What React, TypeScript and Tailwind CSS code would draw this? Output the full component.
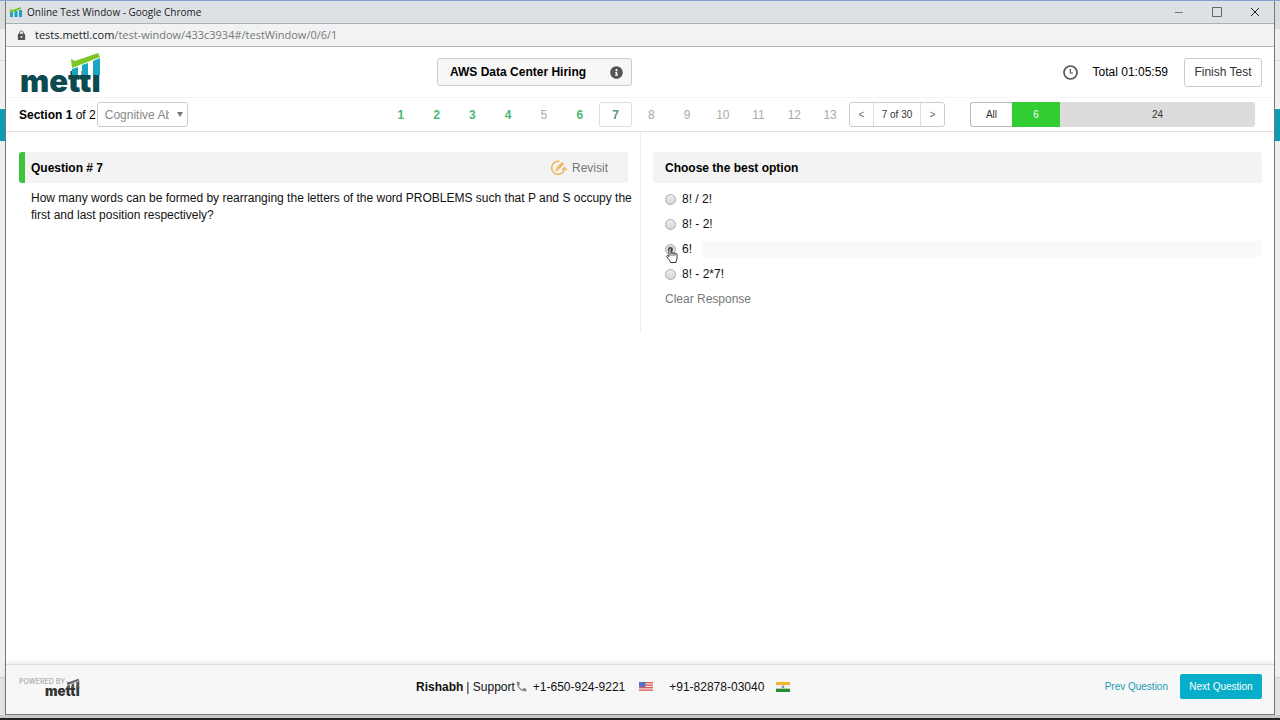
import React from 'react';
import clsx from 'clsx';
import { MdLock, MdPhone } from 'react-icons/md';
import { FaInfoCircle } from 'react-icons/fa';

const options = ['8! / 2!', '8! - 2!', '6!', '8! - 2*7!'];
const answered = [1, 2, 3, 4, 6];
const current = 7;
const pages = Array.from({ length: 13 }, (_, i) => i + 1);

interface LogoProps {
  className?: string;
  text: string;
  bars: string;
  tick: string;
}

const Logo: React.FC<LogoProps> = ({ className, text, bars, tick }) => (
  <svg viewBox="0 0 84 42" className={clsx('overflow-visible', className)} role="img" aria-label="mettl">
    <text x="0" y="41" fill={text} fontSize="31" fontWeight="900" fontFamily="Inter, sans-serif">mettl</text>
    <g fill={bars}>
      <path d="M52 18l6-2v8h-6z" />
      <path d="M62 14l6-2v12h-6z" />
      <path d="M73 10l7-3v17h-7z" />
    </g>
    <path d="M51 8l4 2 23-8 2 4-28 11z" fill={tick} />
  </svg>
);

const Favicon = () => (
  <svg viewBox="0 0 12 10" className="h-[10px] w-3">
    <path d="M0 5h3v5H0zM4.500 4h3v6h-3zM9 3h3v7H9z" fill="#1fa3bd" />
    <path d="M0 2l2 1 9-3v2L0 6z" fill="#79c32b" />
  </svg>
);

const ClockIcon = () => (
  <svg viewBox="0 0 15 15" className="size-[15px]" fill="none" stroke="#555">
    <circle cx="7.500" cy="7.500" r="6.500" strokeWidth="1.700" />
    <path d="M7.300 4v4H10" strokeWidth="1.200" />
  </svg>
);

const RevisitIcon = () => (
  <svg viewBox="0 0 18 16" className="h-4 w-[18px]" fill="none" stroke="#f2b25c">
    <path d="M9.500 1.500A6.500 6.500 0 1 0 14.500 9" strokeWidth="1.500" />
    <path d="M12 10l2.500-2.500L17 10" strokeWidth="1.300" />
    <path d="M7.500 8.800L13 3" strokeWidth="2.800" />
    <path d="M5.500 11l.8-2.800 2 2z" fill="#f2b25c" strokeWidth="0.300" />
  </svg>
);

const UsFlag = () => (
  <svg viewBox="0 0 13 9" className="h-[9px] w-[14px]" preserveAspectRatio="none">
    <path d="M0 0h13v9H0z" fill="#f3dcdc" />
    <path d="M0 .7h13M0 3.200h13M0 5.700h13M0 8.200h13" stroke="#df5a5a" strokeWidth="1.200" />
    <path d="M0 0h6v5H0z" fill="#5873c0" />
  </svg>
);

const IndiaFlag = () => (
  <svg viewBox="0 0 13 9" className="h-[10px] w-[14px]" preserveAspectRatio="none">
    <path d="M0 0h13v3H0z" fill="#f2b52e" />
    <path d="M0 3h13v3H0z" fill="#f4f4f0" />
    <path d="M0 6h13v3H0z" fill="#2f8a2f" />
    <circle cx="6.500" cy="4.500" r="1.300" fill="#7d93b8" />
  </svg>
);

const HandCursor = () => (
  <svg viewBox="0 0 12 16" className="pointer-events-none absolute left-px top-[6px] z-10 h-4 w-3">
    <path
      d="M3 9.500V2a1 1 0 0 1 2 0v4.500a1 1 0 0 1 2 .2 1 1 0 0 1 2 .4 1 1 0 0 1 2 .6V11c0 1.500-.8 2.300-1 4.500H4.500C4.300 13.500 2 11.800.8 9.800c-.5-1 .5-1.600 1.200-1z"
      fill="#fff"
      stroke="#222"
      strokeWidth="0.900"
      strokeLinejoin="round"
    />
    <path d="M5 6.500V9M7 6.800V9M9 7.200V9" stroke="#222" strokeWidth="0.700" />
  </svg>
);

// Slice of the page that shows behind the popup window
const Backdrop: React.FC<{ className: string }> = ({ className }) => (
  <div className={clsx('flex flex-col bg-[#eeeff0]', className)} aria-hidden="true">
    <div className="h-7 bg-[#d9dbdd]" />
    <div className="h-8 border-b border-[#d5d5d5]" />
    <div className="h-12" />
    <div className="h-8 bg-[#0a9db4]" />
    <div className="flex-1" />
    <div className="h-[38px] border-t border-[#d0d0d0] bg-[#e2e2e2]" />
  </div>
);

const TitleBar = () => (
  <div className="flex h-[23px] items-center border-b border-[#a9afb5] bg-[#dde1e6] pl-1">
    <Favicon />
    <span className="ml-[5px] flex-1 font-['Open_Sans',sans-serif] text-[10px] text-[#222]">Online Test Window - Google Chrome</span>
    <div className="flex gap-7 pr-[14px] text-[#333]">
      <button aria-label="Minimize">
        <svg viewBox="0 0 10 10" className="size-[10px]" stroke="#777"><path d="M1 5.500h8" /></svg>
      </button>
      <button aria-label="Maximize">
        <svg viewBox="0 0 10 10" className="size-[10px]" fill="none" stroke="#666"><path d="M.5 .5h9v9h-9z" /></svg>
      </button>
      <button aria-label="Close">
        <svg viewBox="0 0 10 10" className="size-[10px]" stroke="#222"><path d="M1 1l8 8M9 1L1 9" /></svg>
      </button>
    </div>
  </div>
);

const AddressBar = () => (
  <div className="flex h-[23px] items-center border-b border-[#b4b8bb] bg-[#f0f2f3] pl-[10px]">
    <MdLock className="size-[11px] text-[#555]" />
    <span className="ml-2 font-['Open_Sans',sans-serif] text-[11px] text-[#777]">
      <span className="text-[#222]">tests.mettl.com</span>/test-window/433c3934#/testWindow/0/6/1
    </span>
  </div>
);

const Header = () => (
  <header className="flex h-[51px] items-center border-b border-[#f6f6f6] pr-3">
    <div className="w-[34%] pl-[14px]">
      <Logo className="h-[42px] w-[84px]" text="#0d4a50" bars="#1ba5c4" tick="#7cc522" />
    </div>
    <div className="ml-1 flex h-7 w-[195px] items-center justify-between rounded-[3px] border border-[#ccc] bg-[#f7f7f7] pl-3 pr-2">
      <h1 className="whitespace-nowrap text-[12px] font-bold">AWS Data Center Hiring</h1>
      <button aria-label="Test information"><FaInfoCircle className="size-[13px] text-[#555]" /></button>
    </div>
    <div className="ml-auto flex items-center">
      <ClockIcon />
      <span className="ml-[15px] text-[12px]">Total 01:05:59</span>
      <button className="ml-4 h-[29px] w-[78px] rounded-[3px] border border-[#ccc] text-[12px] text-[#333]">Finish Test</button>
    </div>
  </header>
);

const SectionNav = () => (
  <nav className="flex h-[34px] items-center border-b border-[#e2e2e2] pl-[13px] pr-[19px] text-[12px]">
    <label htmlFor="section"><b>Section 1</b> of 2</label>
    <div className="relative ml-px">
      <select
        id="section"
        className="h-[25px] w-[91px] appearance-none overflow-hidden text-clip rounded-[3px] border border-[#ccc] bg-white pl-[7px] pr-[18px] text-[12px] text-[#888]"
      >
        <option>Cognitive Ability</option>
      </select>
      <svg viewBox="0 0 6 5" className="pointer-events-none absolute right-[5px] top-[10px] h-[5px] w-[6px]"><path d="M0 0h6L3 5z" fill="#777" /></svg>
    </div>

    <div className="ml-auto mr-px grid w-[465px] grid-cols-13">
      {pages.map((n) => (
        <button
          key={n}
          className={clsx(
            'mx-px h-[25px] rounded-[3px] border',
            n === current ? 'border-[#ddd] font-bold text-[#5a9488]' : 'border-transparent',
            answered.includes(n) && 'font-bold text-[#48b873]',
            n !== current && !answered.includes(n) && 'text-[#aaa]',
          )}
        >
          {n}
        </button>
      ))}
    </div>

    <div className="flex h-[25px] w-24 rounded-[3px] border border-[#ccc] text-[10px] text-[#333]">
      <button className="flex-1 text-[#666]" aria-label="Previous page">&lt;</button>
      <span className="flex w-12 items-center justify-center border-x border-[#ddd]">7 of 30</span>
      <button className="flex-1 text-[#666]" aria-label="Next page">&gt;</button>
    </div>

    <div className="ml-[25px] flex h-[25px] w-[285px] text-[10px]">
      <button className="w-[42px] rounded-l-[3px] border border-r-0 border-[#bbb] text-[#333]">All</button>
      <button className="w-12 bg-[#32cd32] text-white">6</button>
      <button className="flex-1 rounded-r-[3px] bg-[#dcdcdc] text-[#333]">24</button>
    </div>
  </nav>
);

const QuestionPanel = () => (
  <section className="w-1/2 pl-[13px] pt-5">
    <div className="mr-3 flex h-[31px] items-center justify-between rounded-[3px] border-l-6 border-[#3cc43c] bg-[#f3f3f3] pl-[6px] pr-5">
      <h2 className="text-[12px] font-bold">Question # 7</h2>
      <button className="flex items-center gap-1 text-[12px] text-[#777]">
        <RevisitIcon />
        Revisit
      </button>
    </div>
    <p className="mt-[7px] pl-3 text-[12px] leading-[17px] text-[#111]">
      How many words can be formed by rearranging the letters of the word PROBLEMS such that P and S occupy the first and last position respectively?
    </p>
  </section>
);

const AnswerPanel = () => {
  const [picked, setPicked] = React.useState(2);

  return (
    <section className="w-1/2 border-l border-[#eee] px-3 pt-5">
      <h2 className="flex h-[31px] items-center rounded-[3px] bg-[#f3f3f3] pl-3 text-[12px] font-bold">Choose the best option</h2>
      <div className="mt-2 flex flex-col gap-[9px] pl-3" role="radiogroup" aria-label="Choose the best option">
        {options.map((text, i) => (
          <label key={text} className="relative flex h-4 items-center text-[12px] text-[#111]">
            <input
              type="radio"
              name="answer"
              checked={picked === i}
              onChange={() => setPicked(i)}
              className="size-[11px] appearance-none rounded-full border border-[#aaa] bg-linear-to-b from-[#eee] to-[#d6d6d6] checked:bg-radial checked:from-[#555] checked:from-30% checked:to-[#ddd] checked:to-50%"
            />
            <span className="ml-[6px]">{text}</span>
            {picked === i && <span className="ml-[10px] h-4 flex-1 bg-[#f9f9fa]" />}
            {i === 2 && <HandCursor />}
          </label>
        ))}
      </div>
      <button className="ml-3 mt-[9px] block h-4 text-[12px] leading-4 text-[#777]" onClick={() => setPicked(-1)}>Clear Response</button>
    </section>
  );
};

const Footer = () => (
  <footer className="flex h-[50px] items-center border-t border-[#ddd] bg-[#f7f7f7] pb-[6px] pr-3 text-[12px] text-[#111] shadow-[0_-2px_4px_rgba(0,0,0,0.08)]">
    <div className="flex w-[410px] items-start pl-[13px]">
      <span className="whitespace-nowrap font-[Inter,sans-serif] text-[7px] leading-[8px] text-[#999]">POWERED BY</span>
      <Logo className="-ml-5 h-[18px] w-9" text="#333" bars="#555" tick="#666" />
    </div>
    <b>Rishabh</b>
    <span className="ml-[3px]">| Support</span>
    <MdPhone className="size-[13px] text-[#888]" />
    <a href="tel:+16509249221" className="ml-[5px] mr-[14px]">+1-650-924-9221</a>
    <UsFlag />
    <a href="tel:+918287803040" className="ml-4 mr-3">+91-82878-03040</a>
    <IndiaFlag />
    <button className="ml-auto text-[10px] text-[#2299b3]">Prev Question</button>
    <button className="ml-3 h-[25px] w-[82px] rounded-[2px] bg-[#06aec9] text-[10px] text-white">Next Question</button>
  </footer>
);

export default function App() {
  return (
    <div className="flex min-h-screen flex-col border-t border-[#7fa3cc] bg-[#c9c9c9] font-['Liberation_Sans',Arial,sans-serif] text-black">
      <div className="flex flex-1">
        <Backdrop className="w-[5px]" />
        <div className="flex flex-1 flex-col border-x border-b border-[#777] bg-white">
          <TitleBar />
          <AddressBar />
          <Header />
          <SectionNav />
          <main className="flex-1">
            <div className="flex min-h-[201px]">
              <QuestionPanel />
              <AnswerPanel />
            </div>
          </main>
          <Footer />
        </div>
        <Backdrop className="w-[5px]" />
      </div>
      <div className="h-[3px] shrink-0" />
      <div className="h-[2px] shrink-0 bg-[#222]" />
    </div>
  );
}
